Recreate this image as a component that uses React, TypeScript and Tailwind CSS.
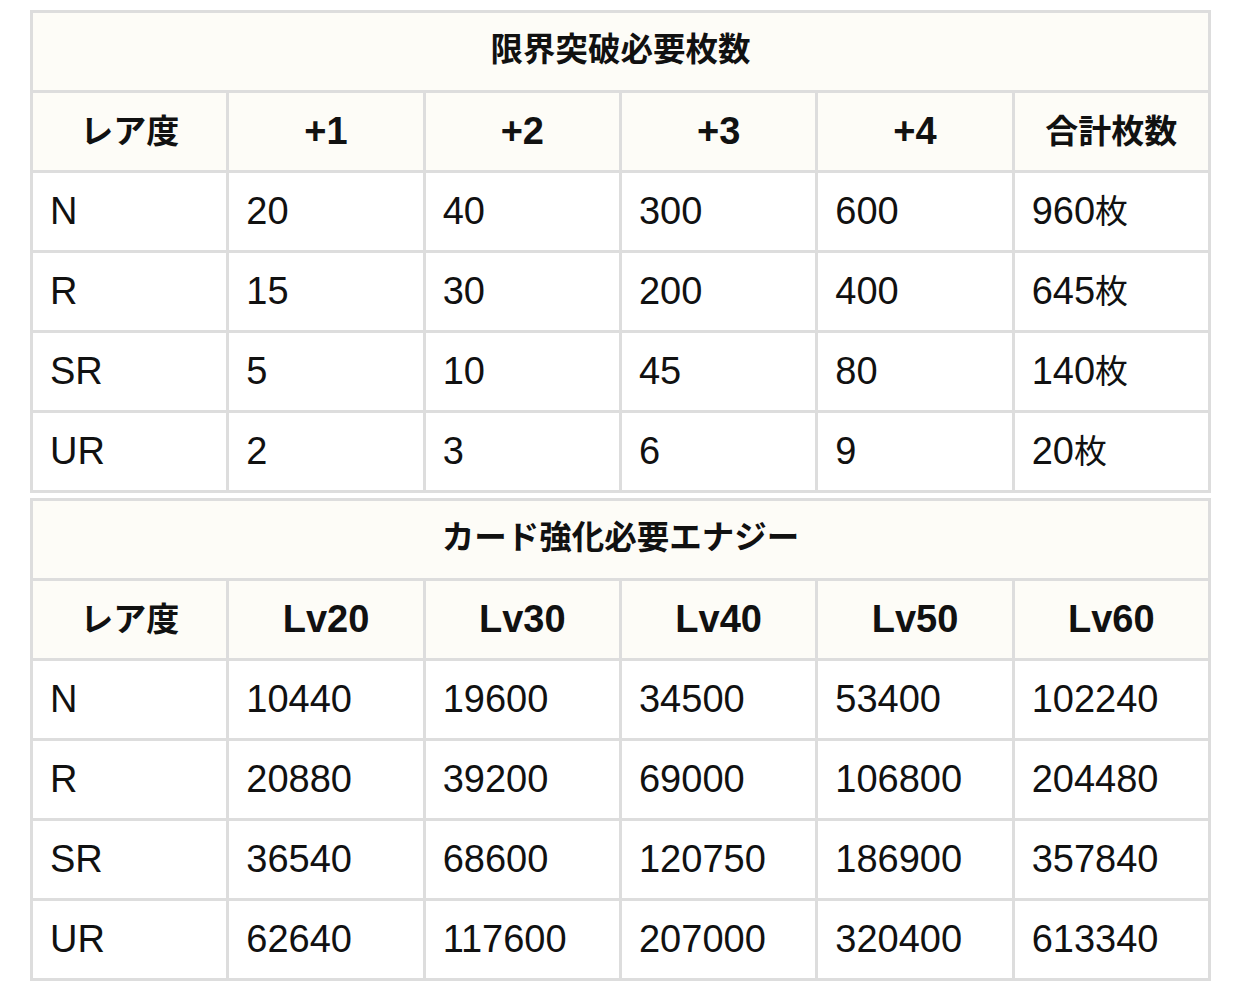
import React from "react";

const font = {
  fontFamily: '"Liberation Sans", "Noto Sans CJK JP", sans-serif',
};

type TableProps = {
  title: string;
  headers: string[];
  rows: string[][];
  className?: string;
};

function Txt({ s }: { s: string }) {
  // split into CJK and non-CJK runs; CJK is drawn slightly smaller
  const parts = s.match(/[\u3000-\u9fff\uff00-\uffef]+|[^\u3000-\u9fff\uff00-\uffef]+/g) ?? [];
  return (
    <>
      {parts.map((p, i) =>
        /[\u3000-\u9fff\uff00-\uffef]/.test(p) ? (
          <span key={i} className="text-[33px]">
            {p}
          </span>
        ) : (
          <span key={i}>{p}</span>
        )
      )}
    </>
  );
}

function DataTable({ title, headers, rows, className }: TableProps) {
  return (
    <div
      className={`grid grid-cols-6 gap-[3px] p-[3px] bg-[#dddddd] w-[1181px] ${className ?? ""}`}
    >
      <div className="col-span-6 h-[77px] bg-[#fdfcf7] flex items-center justify-center text-[32.5px] font-bold text-[#111] pb-[2px]">
        {title}
      </div>
      {headers.map((h, i) => (
        <div
          key={"h" + i}
          className="h-[77px] bg-[#fdfcf7] flex items-center justify-center text-[38px] font-bold text-[#111]"
        >
          <Txt s={h} />
        </div>
      ))}
      {rows.map((r, ri) =>
        r.map((c, ci) => (
          <div
            key={ri + "-" + ci}
            className="h-[77px] bg-white flex items-center pl-[17px] text-[38px] text-[#111]"
          >
            <Txt s={c} />
          </div>
        ))
      )}
    </div>
  );
}

export default function App() {
  return (
    <div className="w-[1241px] h-[987px] bg-white pt-[10px] pl-[30px]" style={font}>
      <DataTable
        title="限界突破必要枚数"
        headers={["レア度", "+1", "+2", "+3", "+4", "合計枚数"]}
        rows={[
          ["N", "20", "40", "300", "600", "960枚"],
          ["R", "15", "30", "200", "400", "645枚"],
          ["SR", "5", "10", "45", "80", "140枚"],
          ["UR", "2", "3", "6", "9", "20枚"],
        ]}
      />
      <DataTable
        className="mt-[5px]"
        title="カード強化必要エナジー"
        headers={["レア度", "Lv20", "Lv30", "Lv40", "Lv50", "Lv60"]}
        rows={[
          ["N", "10440", "19600", "34500", "53400", "102240"],
          ["R", "20880", "39200", "69000", "106800", "204480"],
          ["SR", "36540", "68600", "120750", "186900", "357840"],
          ["UR", "62640", "117600", "207000", "320400", "613340"],
        ]}
      />
    </div>
  );
}
